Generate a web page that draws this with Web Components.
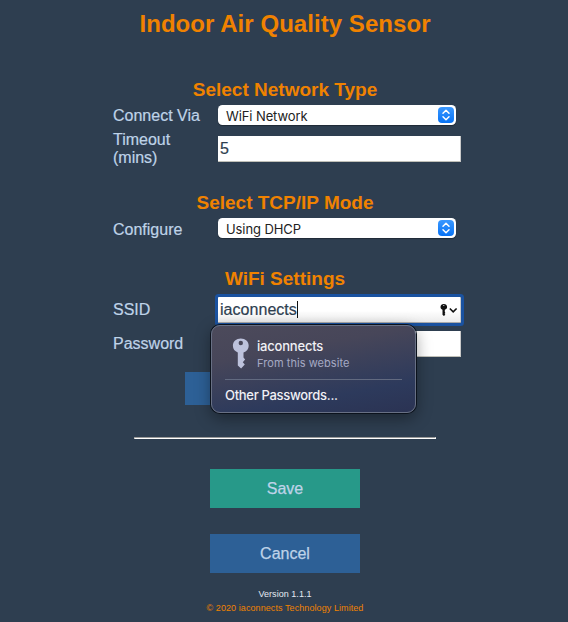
<!DOCTYPE html>
<html lang="en"><head><meta charset="utf-8"><title>Indoor Air Quality Sensor</title>
<style>
html,body{margin:0;background:#2e3e50}
body{width:568px;height:622px;overflow:hidden;font-family:"Liberation Sans",Arial,sans-serif;color:#bfd3e8}
</style></head><body>
<sensor-page></sensor-page>
<script>
const define=(name,html)=>customElements.define(name,class extends HTMLElement{
  constructor(){super();this.attachShadow({mode:'open'}).innerHTML=html;}
});

define('page-heading',`<style>
:host{display:block;text-align:center;color:#f08200;font-weight:bold;font-size:19px;line-height:22px;height:22px;white-space:nowrap}
:host([main]){font-size:24px;line-height:28px;height:28px;letter-spacing:.05px}
</style><slot></slot>`);

define('field-row',`<style>
:host{display:grid;grid-template-columns:105px 243px;align-items:start;font-size:16px;line-height:18px;margin-left:113px;width:348px}
.l{padding-top:var(--lt,0);width:90px;-webkit-text-stroke:.2px currentColor}
.c{padding-top:var(--ct,0)}
</style><div class="l"><slot name="label"></slot></div><div class="c"><slot></slot></div>`);

define('select-box',`<style>
:host{display:flex;box-sizing:border-box;width:238px;height:20px;background:#fff;border-radius:4.5px;box-shadow:0 1px 1px #0005;align-items:center;justify-content:space-between;padding:0 2px 0 8px;color:#222;font:13px/20px Inter,sans-serif}
span{padding-top:2px;white-space:nowrap;letter-spacing:-.1px}
svg{display:block}
</style><span><slot></slot></span><svg width="16" height="16" viewBox="0 0 16 16"><defs><linearGradient id="g" x2="0" y2="1"><stop stop-color="#3a98ff"/><stop offset="1" stop-color="#0873f5"/></linearGradient></defs><rect width="16" height="16" rx="4" fill="url(#g)"/><path d="M5 6.300 8 3.300l3 3M5 9.700l3 3 3-3" fill="none" stroke="#fff" stroke-width="1.500" stroke-linecap="round" stroke-linejoin="round"/></svg>`);

define('text-box',`<style>
:host{display:flex;box-sizing:border-box;width:243px;height:26px;background:#fff;border-right:1px solid #c9c9c9;border-bottom:1px solid #c0c0b8;color:#2e3e50;padding:0 2px;align-items:center;justify-content:space-between;line-height:25px}
:host([focused]){background:linear-gradient(#fff 55%,#ececec);outline:3px solid #1a52a0;border-bottom-color:#aaa;border-radius:.5px}
.t{display:flex;align-items:center;white-space:nowrap;-webkit-text-stroke:.2px currentColor;letter-spacing:.04px}
.caret,svg{display:none}
:host([focused]) .caret{display:block;width:1px;height:17px;background:#111}
:host([focused]) svg{display:block}
</style><div class="t"><slot></slot><i class="caret"></i></div>
<svg width="18" height="14" viewBox="0 0 18 14"><path fill="#111" fill-rule="evenodd" d="M3.800 1C1.900 1 .5 2.300.5 4c0 1.400.8 2.200 2 2.800v5L3.900 13l1.400-1.300-.7-.9.8-.9-.6-.9V6.800C6.200 6.300 7.100 5.300 7.100 4 7.100 2.300 5.700 1 3.800 1Zm0 .9a.6.6 0 1 1 0 1.200.6.6 0 0 1 0-1.200Z"/><path d="m9.800 5.500 3.400 3.300 3.400-3.300" fill="none" stroke="#111" stroke-width="1.600"/></svg>`);

define('push-button',`<style>
:host{display:block;width:150px;height:39px;line-height:40px;text-align:center;background:#2d6096;color:#bfd3e8;font-size:16px;-webkit-text-stroke:.25px currentColor}
:host([primary]){background:#279989}
:host([wide]){width:200px;height:33px}
</style><slot></slot>`);

define('password-menu',`<style>
:host{position:absolute;left:211px;top:325px;box-sizing:border-box;width:205px;height:88px;border-radius:9px;background:linear-gradient(170deg,#4c4a5b 0%,#474659 30%,#2d3a5c 75%,#2b3353 100%);border:1px solid #687084;box-shadow:0 0 0 1px #0b121c,0 5px 16px #0006;padding:11px 13px 0;color:#f0f0f5;font-family:Inter,sans-serif}
.row{display:grid;grid-template-columns:32px 1fr;height:42px}
svg{margin:1px 0 0 7px;display:block}
.n{font-size:13px;line-height:18px;font-weight:500;white-space:nowrap;letter-spacing:-.2px}
.s{font-size:11px;line-height:16px;color:#a5a9c4;white-space:nowrap;letter-spacing:.06px}
.o{border-top:1px solid #626a80;padding-top:6px;width:177px;font-size:13px;line-height:18px;font-weight:500;white-space:nowrap;letter-spacing:-.3px}
</style><div class="row"><svg width="18" height="31" viewBox="0 0 18 31"><path fill="#bdc2dc" fill-rule="evenodd" d="M8.800.5C4.300.5.900 3.600.900 7.700c0 3.300 1.900 5.500 4.900 6.700v13l3.300 3.100 3.700-3.900-2-2.400 2.300-2.700-1.600-2v-5.100c3.200-1.100 5.200-3.400 5.200-6.700C16.700 3.600 13.300.5 8.800.5Zm0 2.300a2.200 2.200 0 1 1 0 4.400 2.200 2.200 0 0 1 0-4.400Z"/></svg><div><div class="n"><slot name="name"></slot></div><div class="s"><slot name="source"></slot></div></div></div><div class="o"><slot name="other"></slot></div>`);

define('sensor-page',`<style>
:host{display:block;position:relative;width:568px;height:622px;overflow:hidden}
.page{display:flex;flex-direction:column;padding-top:10px}
page-heading{width:570px}
push-button,hr,.foot{margin-left:auto;margin-right:auto;transform:translateX(1px)}
hr{box-sizing:border-box;width:302px;height:2px;border:1px solid;border-color:#999 #fff #fff #999;margin-top:32px;margin-bottom:30px}
.foot{font-size:9px;text-align:center;white-space:nowrap;line-height:12px}
.version{margin-top:15px;color:#e4eaf2;letter-spacing:.04px}
.copyright{margin-top:2px;color:#f08200;letter-spacing:.08px}
</style><div class="page">
<page-heading main>Indoor Air Quality Sensor</page-heading>
<page-heading style="margin-top:41px">Select Network Type</page-heading>
<field-row style="margin-top:4px;--lt:2px;height:26px"><span slot="label">Connect Via</span><select-box>WiFi Network</select-box></field-row>
<field-row style="height:61px;--ct:5px"><span slot="label">Timeout (mins)</span><text-box>5</text-box></field-row>
<page-heading>Select TCP/IP Mode</page-heading>
<field-row style="margin-top:4px;--lt:3px;height:50px"><span slot="label">Configure</span><select-box>Using DHCP</select-box></field-row>
<page-heading>WiFi Settings</page-heading>
<field-row style="margin-top:7px;--lt:4px;height:34px"><span slot="label">SSID</span><text-box focused>iaconnects</text-box></field-row>
<field-row style="--lt:4px;height:41px"><span slot="label">Password</span><text-box></text-box></field-row>
<push-button wide></push-button>
<hr>
<push-button primary>Save</push-button>
<push-button style="margin-top:26px">Cancel</push-button>
<div class="foot version">Version 1.1.1</div>
<div class="foot copyright">© 2020 iaconnects Technology Limited</div>
</div>
<password-menu><span slot="name">iaconnects</span><span slot="source">From this website</span><span slot="other">Other Passwords...</span></password-menu>`);
</script></body></html>
